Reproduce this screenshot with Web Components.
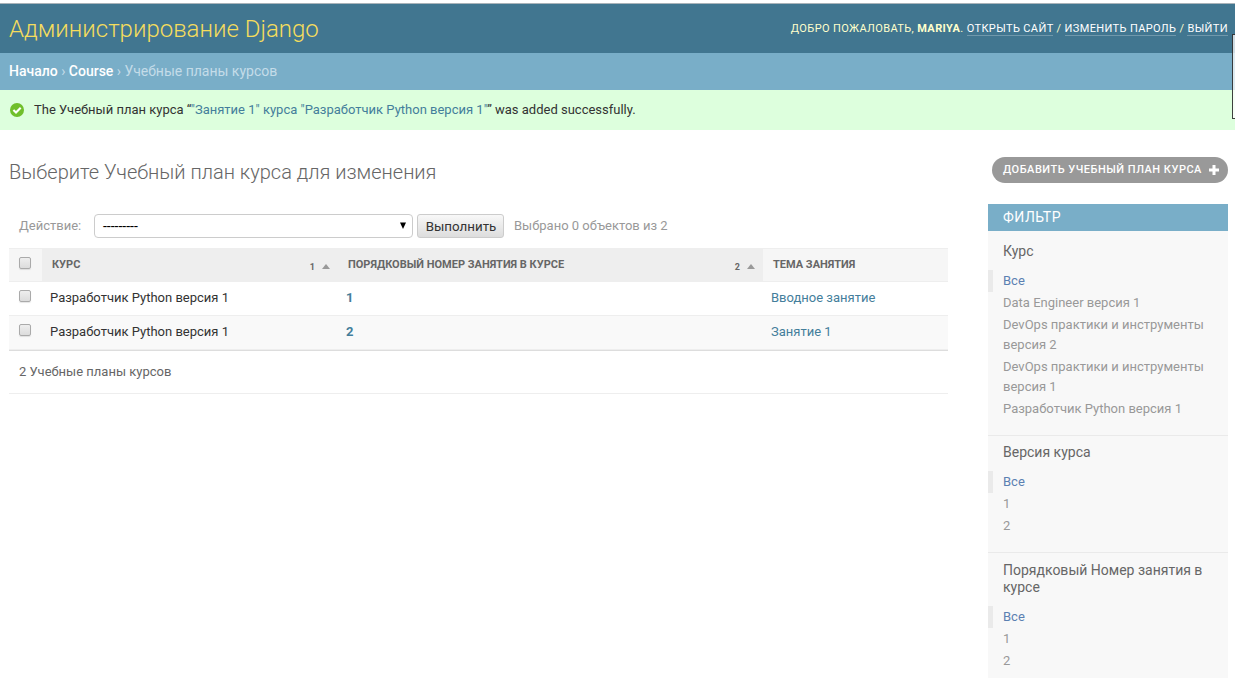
<!DOCTYPE html>
<html lang="ru">
<head>
<meta charset="utf-8">
<title>Администрирование Django</title>
<style>
html,body{margin:0;background:#fff}
body{height:678px;overflow:hidden;font-family:Roboto,"Open Sans",sans-serif;font-size:13px;color:#333}
</style>
</head>
<body>
<admin-page></admin-page>
<script>
const define = (name, html) => {
  const t = document.createElement('template');
  t.innerHTML = html;
  customElements.define(name, class extends HTMLElement {
    connectedCallback() {
      if (this.shadowRoot) return;
      this.attachShadow({mode: 'open'}).appendChild(t.content.cloneNode(true));
    }
  });
};

define('admin-header', `<style>
:host{display:flex;box-sizing:border-box;height:50px;border-top:1px solid #a9b3b9;background:#417690;align-items:center;justify-content:space-between;padding:0 7px 0 9px;color:#ffc}
h1{margin:0;font-size:24px;font-weight:300;color:#f5dd5d;line-height:30px}
.tools{font-size:11px;letter-spacing:.38px;text-transform:uppercase;font-weight:400;line-height:14px;white-space:nowrap}
b{font-weight:700}
a{color:#fff;border-bottom:1px solid rgba(255,255,255,.25)}
</style><h1>Администрирование Django</h1>
<div class="tools">Добро пожаловать, <b>Mariya</b>. <a>Открыть сайт</a> / <a>Изменить пароль</a> / <a>Выйти</a></div>`);

define('bread-crumbs', `<style>
:host{display:block;box-sizing:border-box;height:37px;padding:10px 9px;background:#79aec8;color:#c4dce8;font-size:14px;line-height:17px}
a{color:#fff;font-weight:500}
</style><a>Начало</a> › <a>Course</a> › Учебные планы курсов`);

define('success-message', `<style>
:host{display:flex;box-sizing:border-box;height:40px;align-items:center;padding:0 10px;background:#dfd;font-size:13px;line-height:20px}
svg{margin:0 10px 0 0;flex:none}
a{color:#447e9b}
</style><svg width="14" height="14" viewBox="0 0 14 14"><circle cx="7" cy="7" r="7" fill="#70bf2b"/><path d="M3.4 7l2.6 2.6 4.7-4.9" fill="none" stroke="#fff" stroke-width="2.1"/></svg>
<span>The Учебный план курса “<a>"Занятие 1" курса "Разработчик Python версия 1"</a>” was added successfully.</span>`);

define('actions-bar', `<style>
:host{display:flex;height:26px;align-items:center;padding:0 10px;color:#999;font-size:13px}
label{width:75px}
label,.count{padding-bottom:2px}
.sel{box-sizing:border-box;width:319px;height:24px;border:1px solid #ccc;border-radius:4px;background:#fff;color:#000;display:flex;align-items:center;justify-content:space-between;padding:0 6px 0 8px;margin-right:4px;line-height:20px;font-size:14px}
svg{margin-bottom:1px}
.btn{box-sizing:border-box;width:87px;height:24px;border:1px solid #ccc;border-radius:3px;background:linear-gradient(#f8f8f8,#ddd);color:#333;font-size:13.33px;text-align:center;line-height:24px;padding-left:1px;margin-right:10px}
</style><label>Действие:</label><div class="sel"><span>---------</span><svg width="6" height="7"><path d="M0 .5h6L3 7z" fill="#000"/></svg></div><div class="btn">Выполнить</div><span class="count">Выбрано 0 объектов из 2</span>`);

define('check-box', `<style>
:host{display:block;box-sizing:border-box;width:12px;height:12px;border:1px solid #aaa;border-radius:2px;background:linear-gradient(#eee,#dcdcdc);box-shadow:0 1px 1px rgba(0,0,0,.1)}
</style>`);

define('sort-mark', `<style>
:host{display:flex;gap:7px;align-items:center;font-size:9px;font-weight:700;color:#666;padding:5px 8px 0 0;line-height:12px}
svg{margin-bottom:2px}
</style><slot></slot><svg width="8" height="5"><path d="M0 5L4 0l4 5z" fill="#999"/></svg>`);

define('result-list', `<style>
:host{display:block}
.r{display:grid;grid-template-columns:33px 296px 425px 1fr;box-sizing:border-box}
.h{height:34px;background:#f6f6f6;font-size:11px;font-weight:700;color:#666;text-transform:uppercase;border-top:1px solid #eee;border-bottom:1px solid #eee}
.h>div{display:flex;justify-content:space-between;padding-left:10px;line-height:31px}
.h>.s{background:#eee}
.h sort-mark{line-height:1}
.b{height:34px;line-height:32px;border-bottom:1px solid #eee;font-size:13px}
.b>div{padding-left:8px}
.alt{background:#f9f9f9;height:35px;border-bottom:1px solid #ddd;box-shadow:inset 0 -1px #eee}
.h check-box{margin:8px 0 0 0}.b check-box{margin:8px 0 0 2px}
a{color:#447e9b}b{font-weight:700;color:#447e9b}
.p{box-sizing:border-box;height:43px;padding-left:10px;border-bottom:1px solid #eee;color:#666;line-height:42px}
</style>
<div class="r h"><div><check-box></check-box></div><div class="s"><span>Курс</span><sort-mark>1</sort-mark></div><div class="s"><span>Порядковый номер занятия в курсе</span><sort-mark>2</sort-mark></div><div>Тема занятия</div></div>
<div class="r b"><div><check-box></check-box></div><div>Разработчик Python версия 1</div><div><b>1</b></div><div><a>Вводное занятие</a></div></div>
<div class="r b alt"><div><check-box></check-box></div><div>Разработчик Python версия 1</div><div><b>2</b></div><div><a>Занятие 1</a></div></div>
<div class="p">2 Учебные планы курсов</div>`);

define('add-button', `<style>
:host{display:flex;box-sizing:border-box;width:236px;height:26px;border-radius:13px;background:#999;color:#fff;font-size:11px;font-weight:500;letter-spacing:.5px;text-transform:uppercase;align-items:center;justify-content:space-between;padding:0 9px 0 11px;white-space:nowrap}
span{line-height:24px;padding-bottom:1px}
</style><span><slot></slot></span><svg width="10" height="10"><path d="M0 5h10M5 0v10" stroke="#fff" stroke-width="3"/></svg>`);

define('filter-group', `<style>
:host{display:block;border-bottom:1px solid #eaeaea;padding:8px 15px 15px}
:host(:first-child){padding-top:12px}
:host(:last-child){padding-top:9px}
h3{margin:0 0 10px;font-size:14px;font-weight:400;line-height:17px;color:#666}
</style><h3><slot name="title"></slot></h3><slot></slot>`);

define('filter-item', `<style>
:host{display:block;line-height:20px;padding:1px 0;color:#999;font-size:13px}
:host([selected]){margin-left:-15px;border-left:5px solid #eaeaea;padding-left:10px;color:#5b80b2}
</style><slot></slot>`);

define('filter-panel', `<style>
:host{display:block;height:474px;background:#f8f8f8}
h2{margin:0;height:27px;box-sizing:border-box;padding:0 15px;background:#79aec8;color:#fff;font-size:14px;line-height:26px;font-weight:400;letter-spacing:.5px;text-transform:uppercase}
</style><h2>Фильтр</h2><slot></slot>`);

define('admin-page', `<style>
:host{display:block;position:relative;height:678px;overflow:hidden;padding-top:3px;box-sizing:border-box}
main{display:grid;grid-template-columns:939px 240px;column-gap:40px;padding:27px 7px 0 9px}
h1{margin:3px 0 29px;font-size:20px;font-weight:300;line-height:24px;color:#666}
result-list{margin-top:9px}
add-button{margin:0 0 21px 4px}
.edge{position:absolute;left:1232px;top:34px;width:10px;height:85px;box-sizing:border-box;border:1px solid rgba(0,0,0,.75);background:rgba(255,255,255,.75)}
</style>
<admin-header></admin-header><bread-crumbs></bread-crumbs><success-message></success-message>
<main><section><h1>Выберите Учебный план курса для изменения</h1><actions-bar></actions-bar><result-list></result-list></section>
<aside><add-button>Добавить Учебный план курса</add-button>
<filter-panel>
<filter-group><span slot="title">Курс</span><filter-item selected>Все</filter-item><filter-item>Data Engineer версия 1</filter-item><filter-item>DevOps практики и инструменты версия 2</filter-item><filter-item>DevOps практики и инструменты версия 1</filter-item><filter-item>Разработчик Python версия 1</filter-item></filter-group>
<filter-group><span slot="title">Версия курса</span><filter-item selected>Все</filter-item><filter-item>1</filter-item><filter-item>2</filter-item></filter-group>
<filter-group><span slot="title">Порядковый Номер занятия в курсе</span><filter-item selected>Все</filter-item><filter-item>1</filter-item><filter-item>2</filter-item></filter-group>
</filter-panel></aside></main><div class="edge"></div>`);
</script>
</body>
</html>
